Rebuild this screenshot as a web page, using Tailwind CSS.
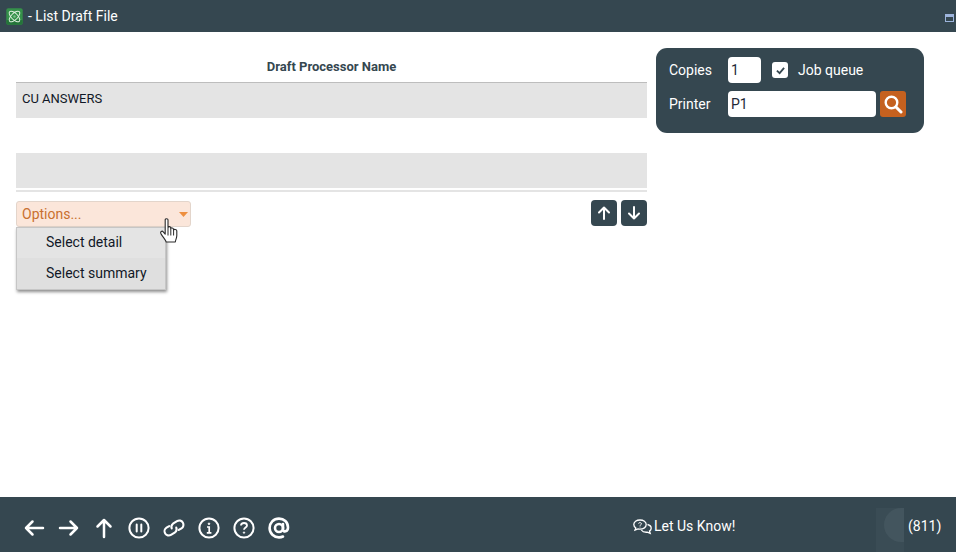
<!DOCTYPE html>
<html>
<head>
<meta charset="utf-8">
<script src="https://cdn.jsdelivr.net/npm/@tailwindcss/browser@4"></script>
</head>
<body class="m-0 bg-white font-['Roboto',sans-serif]">
<div class="w-[956px] h-[552px] flex flex-col overflow-hidden relative">
  <header class="h-[32px] bg-[#354750] flex items-center pl-[6px] shrink-0 relative">
    <svg class="w-[17px] h-[17px]" viewBox="0 0 17 17"><rect x="0.3" y="0.3" width="16.4" height="16.4" rx="2" fill="#35914a"/><path d="M0.3 12H16.7V14.7a2 2 0 0 1-2 2H2.3a2 2 0 0 1-2-2Z" fill="#25743a"/><g fill="none" stroke="#dff0df" stroke-width="1"><ellipse cx="8.5" cy="8.5" rx="6.8" ry="3.2" transform="rotate(45 8.5 8.5)"/><ellipse cx="8.5" cy="8.5" rx="6.8" ry="3.2" transform="rotate(-45 8.5 8.5)"/></g><circle cx="8.5" cy="8.5" r="1.2" fill="#7cc08a"/></svg>
    <span class="ml-[5px] text-white text-[14px] leading-[32px]">- List Draft File</span>
    <div class="absolute left-[945px] top-[14px] w-[9px] h-[8px] border border-[#9db4dc] border-t-[3px]"></div>
  </header>

  <main class="flex-1 relative">
    <div class="absolute left-[16px] top-0 w-[631px]">
      <div class="h-[50px] flex items-end justify-center text-[13px] font-bold text-[#354750] leading-[14px] pb-[8px]">Draft Processor Name</div>
      <div class="h-[36px] bg-[#e4e4e4] border-t border-[#bdbdbd] pl-[6px] pt-[9px] text-[13px] leading-[14px] text-[#111827]">CU ANSWERS</div>
      <div class="h-[35px]"></div>
      <div class="h-[35px] bg-[#e4e4e4]"></div>
      <div class="h-[2px] mt-[2px] bg-[#e4e4e4]"></div>
      <div class="flex justify-between items-start mt-[9px]">
        <div class="w-[175px] h-[26px] bg-[#fbe6da] border border-[#e3d5cb] rounded-[3px] flex items-center justify-between pl-[5px] pr-[1px]">
          <span class="text-[14px] text-[#c9702f]">Options...</span>
          <svg class="w-[9px] h-[5px] mr-[1px] mt-[1px]" viewBox="0 0 9 5"><path d="M0 0H9L4.5 5Z" fill="#ee8f3f"/></svg>
        </div>
        <div class="flex gap-[4px] -mt-[1px]">
          <div class="w-[26px] h-[26px] bg-[#354750] rounded-[4px] flex items-center justify-center">
            <svg class="w-[14px] h-[14px]" viewBox="0 0 14 14" fill="none" stroke="#fff" stroke-width="2" stroke-linecap="round" stroke-linejoin="round"><path d="M7 13V1.5M2 6.5L7 1.5L12 6.5"/></svg>
          </div>
          <div class="w-[26px] h-[26px] bg-[#354750] rounded-[4px] flex items-center justify-center">
            <svg class="w-[14px] h-[14px]" viewBox="0 0 14 14" fill="none" stroke="#fff" stroke-width="2" stroke-linecap="round" stroke-linejoin="round"><path d="M7 1V12.5M2 7.5L7 12.5L12 7.5"/></svg>
          </div>
        </div>
      </div>
    </div>

    <div class="absolute left-[16px] top-[195px] w-[150px] h-[63px] bg-[#dfdfdf] border border-[#c6c6c6] shadow-[1px_2px_3px_rgba(0,0,0,0.45)] text-[14px] text-[#111827]">
      <div class="h-[30px] pl-[29px] flex items-center pb-[1px] bg-[#e4e4e4]">Select detail</div>
      <div class="h-[31px] pl-[29px] flex items-center">Select summary</div>
    </div>

    <svg class="absolute left-[160px] top-[186px] w-[18px] h-[25px]" viewBox="0 0 18 25"><path d="M5.2 1.8C5.2 .3 8 .3 8 1.8V9.5C8.3 8.3 10.5 8.3 10.7 9.8V10.6C11.1 9.5 13.3 9.7 13.5 11.2V12C14 11 16.6 11.2 16.8 12.8V17.5C16.8 20 15.6 21.5 15.3 24H6.2C5.6 22 3.2 19.5 .9 15.6C0 13.8 2 12.4 3.2 13.8L5.2 16.2Z" fill="#fff" stroke="#2a2a2a" stroke-width="1.1" stroke-linejoin="round"/><path d="M8 10V17.5M10.8 11V17.5M13.6 12V17.5" stroke="#2a2a2a" stroke-width="1"/></svg>

    <div class="absolute left-[656px] top-[16px] w-[268px] h-[85px] bg-[#354750] rounded-[11px] text-white text-[14px]">
      <div class="absolute left-[13px] top-[14px] leading-[17px]">Copies</div>
      <div class="absolute left-[72px] top-[9px] w-[33px] h-[26px] bg-white rounded-[4px] text-[#1f2937] pl-[3px] leading-[26px]">1</div>
      <div class="absolute left-[116px] top-[14px] w-[16px] h-[16px] bg-white rounded-[3px] flex items-center justify-center">
        <svg class="w-[9px] h-[9px]" viewBox="0 0 10 10" fill="none" stroke="#354750" stroke-width="2"><path d="M1 5.2L4 8L9 2"/></svg>
      </div>
      <div class="absolute left-[142px] top-[14px] leading-[17px]">Job queue</div>
      <div class="absolute left-[13px] top-[48px] leading-[17px]">Printer</div>
      <div class="absolute left-[72px] top-[43px] w-[148px] h-[26px] bg-white rounded-[4px] text-[#1f2937] pl-[3px] leading-[26px]">P1</div>
      <div class="absolute left-[224px] top-[43px] w-[26px] h-[26px] bg-[#c5611f] rounded-[3px] flex items-center justify-center">
        <svg class="w-[20px] h-[20px]" viewBox="0 0 20 20" fill="none" stroke="#fff" stroke-linecap="round"><circle cx="8.5" cy="8.5" r="5.8" stroke-width="2.4"/><path d="M13 13L18 18" stroke-width="3"/></svg>
      </div>
    </div>
  </main>

  <footer class="h-[55px] bg-[#354750] shrink-0 relative text-white">
    <div class="absolute left-[23px] top-[20px] flex items-center gap-[13px]">
      <svg class="w-[22px] h-[22px]" viewBox="0 0 22 22" fill="none" stroke="#fff" stroke-width="2.5" stroke-linecap="round" stroke-linejoin="round"><path d="M20 11H3M9.5 4.5L3 11L9.5 17.5"/></svg>
      <svg class="w-[22px] h-[22px]" viewBox="0 0 22 22" fill="none" stroke="#fff" stroke-width="2.5" stroke-linecap="round" stroke-linejoin="round"><path d="M2 11H19M12.5 4.5L19 11L12.5 17.5"/></svg>
      <svg class="w-[22px] h-[22px]" viewBox="0 0 22 22" fill="none" stroke="#fff" stroke-width="2.5" stroke-linecap="round" stroke-linejoin="round"><path d="M11 20V3M4.5 9.5L11 3L17.5 9.5"/></svg>
      <svg class="w-[22px] h-[22px]" viewBox="0 0 22 22" fill="none" stroke="#fff" stroke-width="2"><circle cx="11" cy="11" r="9.6"/><path d="M8.7 7.5V14.5M13.3 7.5V14.5" stroke-linecap="round"/></svg>
      <svg class="w-[22px] h-[22px] overflow-visible" viewBox="0 0 22 22" fill="none" stroke="#fff" stroke-width="2.1" stroke-linecap="round"><g transform="rotate(-32 11 11)"><path d="M8 6.8H4.8a4.2 4.2 0 0 0 0 8.4H9.6a4.2 4.2 0 0 0 3.6-3.4"/><path d="M14 15.2H17.2a4.2 4.2 0 0 0 0-8.4H12.4a4.2 4.2 0 0 0-3.6 3.4"/></g></svg>
      <svg class="w-[22px] h-[22px]" viewBox="0 0 22 22" fill="none" stroke="#fff" stroke-width="2"><circle cx="11" cy="11" r="9.6"/><circle cx="11" cy="6.8" r="0.8" fill="#fff" stroke-width="1"/><path d="M9 10H11.2V15.5M8.8 15.8H13.4" stroke-width="1.7"/></svg>
      <svg class="w-[22px] h-[22px]" viewBox="0 0 22 22" fill="none" stroke="#fff" stroke-width="2"><circle cx="11" cy="11" r="9.6"/><path d="M8 8.6C8 6.8 9.4 6 11 6C12.8 6 14 7 14 8.5C14 10.5 11 10.5 11 12.8" stroke-width="1.8"/><circle cx="11" cy="15.6" r="0.7" fill="#fff" stroke-width="1"/></svg>
      <svg class="w-[22px] h-[22px]" viewBox="0 0 22 22" fill="none" stroke="#fff" stroke-width="2.6" stroke-linecap="round"><circle cx="11" cy="11" r="4"/><path d="M15 7V12.5C15 15.5 20 15 20 10.5C20 5 16 1.6 11 1.6C5.5 1.6 1.6 5.8 1.6 11C1.6 16.5 6 20.4 11 20.4C12.5 20.4 14 20 15 19.5"/></svg>
    </div>
    <div class="absolute left-[633px] top-[21px] flex items-center">
      <svg class="w-[19px] h-[16px]" viewBox="0 0 19 16" fill="none" stroke="#fff" stroke-width="1.3"><path d="M7 1C3.5 1 .8 3 .8 5.6C.8 7 1.5 8.2 2.8 9L2 11.2L5 10C5.6 10.1 6.3 10.2 7 10.2C10.5 10.2 13.2 8.2 13.2 5.6C13.2 3 10.5 1 7 1Z"/><path d="M14.5 5.5C16.7 6 18.2 7.4 18.2 9.2C18.2 10.4 17.5 11.4 16.5 12.1L17.2 14.4L14.3 13.2C12 13.4 9.5 12.8 8.3 11"/><path d="M5.5 4.5C5.5 3.4 8.5 3.3 8.5 4.8C8.5 5.8 7 5.7 7 6.8M7 7.6V8.4" stroke-width="1"/></svg>
      <span class="ml-[2px] text-[14px] leading-[17px]">Let Us Know!</span>
    </div>
    <div class="absolute left-[876px] top-[11px] w-[28px] h-[44px] bg-[#3a4c55] overflow-hidden">
      <div class="absolute left-[8px] top-[0px] w-[40px] h-[34px] rounded-full bg-[#43555e]"></div>
    </div>
    <span class="absolute left-[908px] top-[21px] text-[14px] leading-[17px]">(811)</span>
  </footer>
</div>
</body>
</html>
